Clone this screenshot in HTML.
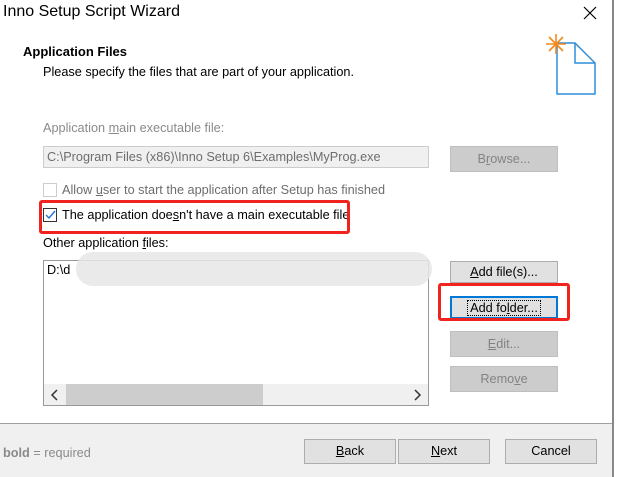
<!DOCTYPE html><html><head><style>
*{margin:0;padding:0;box-sizing:border-box}
body{width:617px;height:477px;background:#fff;font-family:"Liberation Sans",sans-serif;font-size:12.7px;color:#000;position:relative;overflow:hidden}
.a{position:absolute;white-space:nowrap}
.btn{position:absolute;background:#e1e1e1;border:1px solid #adadad;text-align:center;font-size:12.7px}
.dis{background:#cccccc;border-color:#bfbfbf;color:#838383}
.cb{position:absolute;width:14px;height:14px;border:1px solid #333;background:#fff}
</style></head><body>
<div class="a" style="left:3px;top:3px;font-size:16px">Inno Setup Script Wizard</div>
<svg class="a" style="left:583px;top:6px" width="14" height="14"><path d="M1 1L13 13M13 1L1 13" stroke="#000" stroke-width="1.2"/></svg>
<div class="a" style="left:23px;top:44px;font-weight:bold;font-size:13px">Application Files</div>
<div class="a" style="left:43px;top:65px">Please specify the files that are part of your application.</div>
<svg class="a" style="left:543px;top:32px" width="58" height="66">
<path d="M14 11H32L52 31V62H14Z" fill="#fff" stroke="#2f8fd8" stroke-width="1.5"/>
<path d="M32 11V31H52" fill="none" stroke="#2f8fd8" stroke-width="1.5"/>
<g stroke="#f28a1e" stroke-width="1.6"><path d="M13 2V22M3 12H23M6 5L20 19M20 5L6 19"/></g>
</svg>
<div class="a" style="left:43px;top:121px;color:#8a8a8a">Application <u>m</u>ain executable file:</div>
<div class="a" style="left:43px;top:146px;width:386px;height:22px;background:#f0f0f0;border:1px solid #ccc;color:#6d6d6d;padding:3px 3px">C:\Program Files (x86)\Inno Setup 6\Examples\MyProg.exe</div>
<div class="btn dis" style="left:450px;top:146px;width:108px;height:26px;line-height:24px">B<u>r</u>owse...</div>
<div class="cb" style="left:43px;top:183px;border-color:#ccc"></div>
<div class="a" style="left:62px;top:183px;color:#6d6d6d">Allow <u>u</u>ser to start the application after Setup has finished</div>
<div class="cb" style="left:43px;top:208px"><svg width="12" height="12" style="position:absolute;left:0;top:0"><path d="M2 6L5 9L11 2" fill="none" stroke="#1a73d6" stroke-width="1.4"/></svg></div>
<div class="a" style="left:62px;top:208px">The application doe<u>s</u>n't have a main executable file</div>
<div class="a" style="left:39px;top:200px;width:311px;height:34px;border:3px solid #f0231f;border-radius:3px"></div>
<div class="a" style="left:43px;top:236px">Other application <u>f</u>iles:</div>
<div class="a" style="left:43px;top:260px;width:386px;height:146px;border:1px solid #999;background:#fff"></div>
<div class="a" style="left:47px;top:263px">D:\d</div>
<div class="a" style="left:76px;top:252px;width:356px;height:34px;background:#e6e6e6;border-radius:18px;opacity:.85"></div>
<div class="a" style="left:44px;top:384px;width:384px;height:21px;background:#f0f0f0"></div>
<div class="a" style="left:66px;top:384px;width:197px;height:21px;background:#cdcdcd"></div>
<svg class="a" style="left:50px;top:389px" width="10" height="12"><path d="M7 1L2 6L7 11" fill="none" stroke="#333" stroke-width="1.5"/></svg>
<svg class="a" style="left:412px;top:389px" width="10" height="12"><path d="M3 1L8 6L3 11" fill="none" stroke="#333" stroke-width="1.5"/></svg>
<div class="btn" style="left:450px;top:261px;width:108px;height:22px;line-height:20px"><u>A</u>dd file(s)...</div>
<div class="btn" style="left:450px;top:296px;width:108px;height:23px;line-height:21px;border:2px solid #0078d7"><span style="outline:1px dotted #000;padding:0 2px">Add fo<u>l</u>der...</span></div>
<div class="a" style="left:438px;top:283px;width:132px;height:38px;border:3px solid #f0231f;border-radius:3px"></div>
<div class="btn dis" style="left:450px;top:331px;width:108px;height:26px;line-height:24px"><u>E</u>dit...</div>
<div class="btn dis" style="left:450px;top:366px;width:108px;height:26px;line-height:24px">Remo<u>v</u>e</div>
<div class="a" style="left:0;top:423px;width:612px;height:54px;background:#f0f0f0;border-top:1px solid #a0a0a0"></div>
<div class="a" style="left:612px;top:0;width:2px;height:477px;background:#888"></div>
<div class="a" style="left:3px;top:446px;color:#8a8a8a"><b>bold</b> = required</div>
<div class="btn" style="left:304px;top:439px;width:92px;height:25px;line-height:23px"><u>B</u>ack</div>
<div class="btn" style="left:398px;top:439px;width:92px;height:25px;line-height:23px"><u>N</u>ext</div>
<div class="btn" style="left:505px;top:439px;width:92px;height:25px;line-height:23px">Cancel</div>
</body></html>
